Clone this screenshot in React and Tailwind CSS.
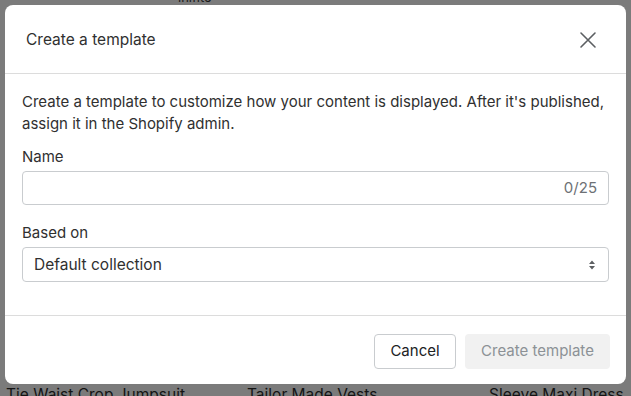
import React from "react";

export default function App() {
  return (
    <div
      className="relative w-[631px] h-[396px] overflow-hidden bg-[#7b7b7b]"
      style={{ fontFamily: "Inter, 'Noto Sans', sans-serif" }}
    >
      {/* background page content (dimmed) */}
      <div className="absolute left-[178px] top-[-12px] text-[13px] text-[#1a1a1a]">inifite</div>
      <div className="absolute left-0 right-0 top-[385px] flex text-[15.5px] text-[#141414] leading-[20px]">
        <div className="w-[242px] pl-[6px]">Tie Waist Crop Jumpsuit</div>
        <div className="w-[242px] pl-[5px]">Tailor Made Vests</div>
        <div className="pl-[5px]">Sleeve Maxi Dress</div>
      </div>

      {/* modal */}
      <div className="absolute left-[5px] top-[5px] w-[621px] h-[379px] bg-white rounded-[8px] flex flex-col text-[#303030]">
        <div className="h-[69px] shrink-0 flex items-center justify-between pl-[21px] pr-[28px] border-b border-[#dcdcdc]">
          <div className="text-[15.5px] pt-[2px]">Create a template</div>
          <svg width="20" height="20" viewBox="0 0 20 20" className="text-[#5c5f62] mt-[2px]">
            <path d="M3 3L17 17M17 3L3 17" stroke="currentColor" strokeWidth="1.6" strokeLinecap="round" />
          </svg>
        </div>
        <div className="flex-1 px-[17px] pt-[17px] flex flex-col">
          <p className="text-[15px] leading-[22px]">
            Create a template to customize how your content is displayed. After it's published, assign it in the Shopify admin.
          </p>
          <div className="mt-[12px] text-[15px] leading-[20px]">Name</div>
          <div className="mt-[4px] h-[34px] border border-[#c9cccf] rounded-[4px] flex items-center justify-end pr-[11px] text-[15px] text-[#6d7175]">
            0/25
          </div>
          <div className="mt-[18px] text-[15px] leading-[20px]">Based on</div>
          <div className="mt-[4px] h-[35px] border border-[#c9cccf] rounded-[4px] flex items-center justify-between pl-[11px] pr-[12px] text-[15.5px]">
            <span>Default collection</span>
            <svg width="8" height="12" viewBox="0 0 8 12" className="text-[#5c5f62]">
              <path d="M1 5L4 1.5L7 5Z M1 7L4 10.5L7 7Z" fill="currentColor" />
            </svg>
          </div>
        </div>
        <div className="h-[69px] shrink-0 border-t border-[#dcdcdc] flex items-center justify-end gap-[9px] px-[16px] pt-[2px]">
          <button className="h-[35px] w-[82px] border border-[#c9cccf] rounded-[4px] text-[15px] text-[#202223] bg-white">
            Cancel
          </button>
          <button className="h-[35px] w-[145px] rounded-[4px] text-[15px] text-[#8c9196] bg-[#f1f1f1]">
            Create template
          </button>
        </div>
      </div>
    </div>
  );
}
